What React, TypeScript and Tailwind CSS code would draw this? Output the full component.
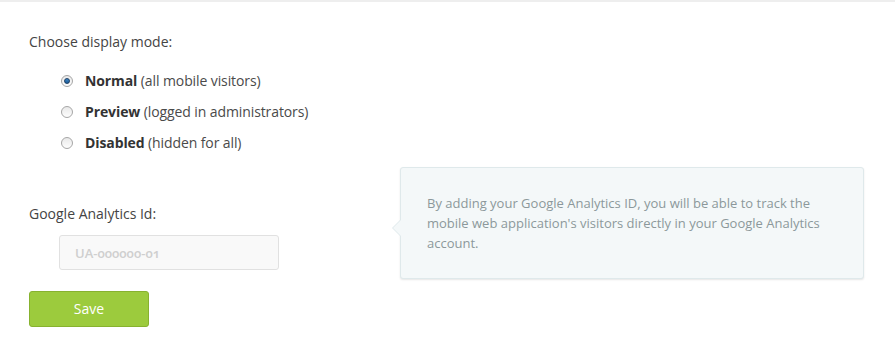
import { useState } from 'react';

type Mode = 'normal' | 'preview' | 'disabled';

const modes: { id: Mode; title: string; note: string }[] = [
  { id: 'normal', title: 'Normal', note: '(all mobile visitors)' },
  { id: 'preview', title: 'Preview', note: '(logged in administrators)' },
  { id: 'disabled', title: 'Disabled', note: '(hidden for all)' },
];

function Radio({ checked }: { checked: boolean }) {
  return (
    <span className="flex h-[12px] w-[12px] items-center justify-center rounded-full border border-[#a6a6a6] bg-gradient-to-b from-[#e9e9e9] to-[#fdfdfd]">
      {checked && (
        <span className="h-[6px] w-[6px] rounded-full border border-[#1d3f64] bg-gradient-to-b from-[#3b86c7] to-[#1c5d99]" />
      )}
    </span>
  );
}

export default function App() {
  const [mode, setMode] = useState<Mode>('normal');

  return (
    <div className="min-h-[349px] w-[895px] border-t-2 border-[#eeeeee] bg-white pl-[29px] pt-[30px] font-['Open_Sans',sans-serif] text-[14px] leading-[20px] text-[#444]">
      <div>Choose display mode:</div>

      <div className="mt-[19px] flex flex-col gap-[11px] pl-[32px]">
        {modes.map((m) => (
          <label key={m.id} className="flex cursor-pointer items-center gap-[12px]" onClick={() => setMode(m.id)}>
            <Radio checked={mode === m.id} />
            <span className="tracking-[-0.1px] text-[#4a4a4a]">
              <span className="font-bold text-[#333]">{m.title}</span> {m.note}
            </span>
          </label>
        ))}
      </div>

      <div className="mt-[14px] flex items-start">
        <div className="w-[371px] shrink-0">
          <div className="mt-[37px]">Google Analytics Id:</div>
          <input
            type="text"
            placeholder="UA-000000-01"
            className="ml-[30px] mt-[11px] block h-[35px] w-[220px] rounded-[3px] border border-[#e1e1e1] bg-[#f9f9f9] px-[15px] text-[13px] font-semibold text-[#555] oldstyle-nums outline-none placeholder:text-[#cfcfcf]"
          />
          <button
            type="button"
            className="mt-[21px] block h-[36px] w-[120px] rounded-[3px] border border-[#87b22f] bg-[#9ccb3d] text-[14px] text-white"
          >
            Save
          </button>
        </div>

        <div className="relative w-[464px] rounded-[3px] border border-[#dfe9eb] bg-[#f4f8f9] pb-[25px] pl-[26px] pr-[20px] pt-[25px] text-[13px] leading-[20px] text-[#8c989b] shadow-[0_1px_2px_rgba(0,0,0,0.1)]">
          <span className="absolute left-[-9px] top-[51px] h-0 w-0 border-y-[9px] border-r-[9px] border-y-transparent border-r-[#dfe9eb]" />
          <span className="absolute left-[-8px] top-[52px] h-0 w-0 border-y-[8px] border-r-[8px] border-y-transparent border-r-[#f4f8f9]" />
          By adding your Google Analytics ID, you will be able to track the mobile web application's visitors directly in your Google Analytics account.
        </div>
      </div>
    </div>
  );
}
